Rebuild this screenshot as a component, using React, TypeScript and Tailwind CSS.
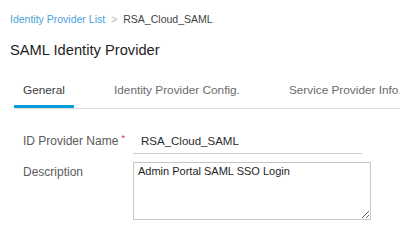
export default function App() {
  const tabs = ["General", "Identity Provider Config.", "Service Provider Info."];
  const active = 0;

  return (
    <div className="h-[242px] w-[400px] overflow-hidden bg-white font-['Liberation_Sans',Arial,sans-serif]">
      <div className="flex items-center gap-[6px] pl-[10px] pt-[13px] text-[10.5px] leading-[12px]">
        <span className="text-[#4aa2dc]">Identity Provider List</span>
        <span className="text-[#b0b0b0]">&gt;</span>
        <span className="text-[#444]">RSA_Cloud_SAML</span>
      </div>

      <h1 className="mt-[16px] pl-[10px] text-[14.7px] leading-[18px] text-[#1e1e1e]">
        SAML Identity Provider
      </h1>

      <div className="ml-[14px] mt-[24px] flex gap-[31px] whitespace-nowrap border-b border-[#e0e0e0]">
        {tabs.map((t, i) => (
          <div
            key={t}
            className={`border-b-[3px] px-[9px] pb-[8px] text-[11.8px] leading-[14px] ${
              i === active ? "border-[#049fd9] text-[#3c3c3c]" : "border-transparent text-[#6a6a6a]"
            }`}
          >
            {t}
          </div>
        ))}
      </div>

      <div className="pl-[23px] pt-[20px]">
        <div className="flex">
          <div className="w-[110px] pt-[5px] text-[12px] leading-[14px] text-[#5a5a5a]">
            ID Provider Name<sup className="ml-[3px] text-[9px] text-[#d0263a]">*</sup>
          </div>
          <div className="h-[25px] w-[229px] border-b border-[#cfcfcf] pl-[8px] pt-[5px] text-[11.5px] leading-[14px] text-[#2a2a2a]">
            RSA_Cloud_SAML
          </div>
        </div>

        <div className="mt-[8px] flex">
          <div className="w-[110px] pt-[3px] text-[12px] leading-[14px] text-[#5a5a5a]">Description</div>
          <textarea
            readOnly
            value="Admin Portal SAML SSO Login"
            className="h-[58px] w-[238px] border border-[#c6c6c6] px-[4px] pt-[2px] text-[11px] leading-[13px] font-medium text-[#1e1e1e] outline-none"
          />
        </div>
      </div>
    </div>
  );
}
